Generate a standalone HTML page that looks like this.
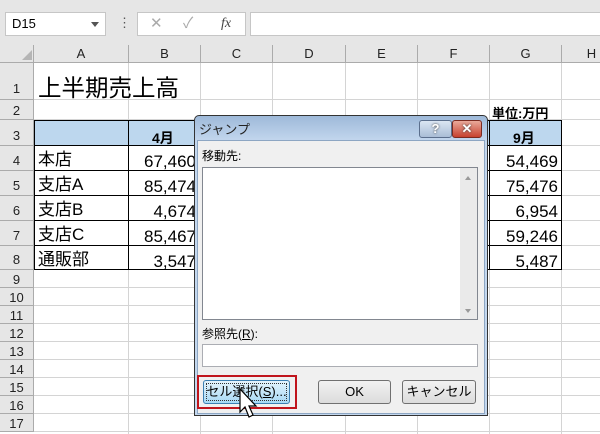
<!DOCTYPE html><html><head><meta charset="utf-8"><style>
*{box-sizing:border-box;margin:0;padding:0}
body{width:600px;height:434px;position:relative;overflow:hidden;background:#fff;font-family:"Liberation Sans","Noto Sans CJK JP",sans-serif}
.a{position:absolute}
.hc{position:absolute;top:45px;height:18px;border-right:1px solid #ababab;background:#e6e6e6;font-size:13px;text-align:center;line-height:18px;color:#222;border-bottom:1px solid #ababab}
.rh{position:absolute;left:0;width:34px;background:#e6e6e6;border-bottom:1px solid #ababab;border-right:1px solid #ababab;font-size:13px;text-align:center;color:#222}
.vl{position:absolute;top:63px;bottom:0;width:1px;background:#d4d4d4}
.hl{position:absolute;left:34px;right:0;height:1px;background:#d4d4d4}
.btn{position:absolute;height:24px;border:1px solid #707070;border-radius:3px;background:linear-gradient(#f2f2f2,#dcdcdc);font-size:13px;text-align:center;line-height:22px}
</style></head><body>
<div class="a" style="left:0;top:0;width:600px;height:45px;background:#e6e6e6"></div>
<div class="a" style="left:5px;top:12px;width:101px;height:24px;background:#fff;border:1px solid #c6c6c6;font-size:13px;line-height:22px;padding-left:6px">D15<span style="position:absolute;right:6px;top:9px;border:4px solid transparent;border-top:5px solid #555"></span></div>
<div class="a" style="left:118px;top:15px;font-size:13px;color:#555">⋮</div>
<div class="a" style="left:137px;top:12px;width:109px;height:24px;background:#fff;border:1px solid #c6c6c6;color:#aaa;font-size:15px;line-height:22px"><span style="position:absolute;left:12px">✕</span><span style="position:absolute;left:45px">✓</span><span style="position:absolute;left:83px;color:#444;font-family:'Liberation Serif';font-style:italic;font-size:14px">fx</span></div>
<div class="a" style="left:250px;top:12px;width:360px;height:24px;background:#fff;border:1px solid #c6c6c6"></div>
<div class="hc" style="left:0;width:34px"></div>
<div class="a" style="left:22px;top:50px;border:5px solid transparent;border-right-color:#b5b5b5;border-bottom-color:#b5b5b5"></div>
<div class="hc" style="left:34px;width:95px">A</div>
<div class="hc" style="left:129px;width:72px">B</div>
<div class="hc" style="left:201px;width:72px">C</div>
<div class="hc" style="left:273px;width:73px">D</div>
<div class="hc" style="left:346px;width:72px">E</div>
<div class="hc" style="left:418px;width:72px">F</div>
<div class="hc" style="left:490px;width:72px">G</div>
<div class="hc" style="left:562px;width:60px">H</div>
<div class="vl" style="left:128px"></div><div class="vl" style="left:200px"></div><div class="vl" style="left:272px"></div><div class="vl" style="left:345px"></div><div class="vl" style="left:417px"></div><div class="vl" style="left:489px"></div><div class="vl" style="left:561px"></div>
<div class="hl" style="top:99px"></div><div class="hl" style="top:119px"></div><div class="hl" style="top:145px"></div><div class="hl" style="top:170px"></div><div class="hl" style="top:195px"></div><div class="hl" style="top:220px"></div><div class="hl" style="top:245px"></div><div class="hl" style="top:269px"></div>
<div class="hl" style="top:287px"></div><div class="hl" style="top:305px"></div><div class="hl" style="top:323px"></div><div class="hl" style="top:341px"></div><div class="hl" style="top:359px"></div><div class="hl" style="top:377px"></div><div class="hl" style="top:395px"></div><div class="hl" style="top:413px"></div><div class="hl" style="top:431px"></div>
<div class="rh" style="top:63px;height:37px;line-height:52px">1</div>
<div class="rh" style="top:100px;height:20px;line-height:22px">2</div>
<div class="rh" style="top:120px;height:26px;line-height:32px">3</div>
<div class="rh" style="top:146px;height:25px;line-height:30px">4</div>
<div class="rh" style="top:171px;height:25px;line-height:30px">5</div>
<div class="rh" style="top:196px;height:25px;line-height:30px">6</div>
<div class="rh" style="top:221px;height:25px;line-height:30px">7</div>
<div class="rh" style="top:246px;height:24px;line-height:28px">8</div>
<div class="rh" style="top:270px;height:18px;line-height:20px">9</div>
<div class="rh" style="top:288px;height:18px;line-height:20px">10</div>
<div class="rh" style="top:306px;height:18px;line-height:20px">11</div>
<div class="rh" style="top:324px;height:18px;line-height:20px">12</div>
<div class="rh" style="top:342px;height:18px;line-height:20px">13</div>
<div class="rh" style="top:360px;height:18px;line-height:20px">14</div>
<div class="rh" style="top:378px;height:18px;line-height:20px">15</div>
<div class="rh" style="top:396px;height:18px;line-height:20px">16</div>
<div class="rh" style="top:414px;height:18px;line-height:20px">17</div>
<div class="a" style="left:38px;top:69px;font-size:23.5px">上半期売上高</div>
<div class="a" style="left:492px;top:103px;font-size:13px;font-weight:bold">単位:万円</div>
<div class="a" style="left:34px;top:120px;width:528px;height:26px;background:#bdd7ee;border:1px solid #000"></div>
<div class="a" style="left:128px;top:120px;width:1px;height:150px;background:#000"></div>
<div class="a" style="left:34px;top:120px;width:1px;height:150px;background:#000"></div>
<div class="a" style="left:561px;top:120px;width:1px;height:150px;background:#000"></div>
<div class="a" style="left:489px;top:120px;width:1px;height:150px;background:#000"></div>
<div class="a" style="left:34px;top:170px;width:528px;height:1px;background:#000"></div>
<div class="a" style="left:34px;top:195px;width:528px;height:1px;background:#000"></div>
<div class="a" style="left:34px;top:220px;width:528px;height:1px;background:#000"></div>
<div class="a" style="left:34px;top:245px;width:528px;height:1px;background:#000"></div>
<div class="a" style="left:34px;top:269px;width:528px;height:1px;background:#000"></div>
<div class="a" style="left:152px;top:128px;font-size:14px;font-weight:bold">4月</div>
<div class="a" style="left:513px;top:128px;font-size:14px;font-weight:bold">9月</div>
<div class="a" style="left:38px;top:149px;font-size:17px;line-height:22px">本店<br><span style="position:relative;top:3px">支店A</span><br><span style="position:relative;top:6px">支店B</span><br><span style="position:relative;top:9px">支店C</span><br><span style="position:relative;top:12px">通販部</span></div>
<div class="a" style="left:130px;top:149px;width:100px;text-align:left;font-size:17px;line-height:25px;padding-left:14px">67,460<br>85,474<br>&nbsp;&nbsp;4,674<br>85,467<br>&nbsp;&nbsp;3,547</div>
<div class="a" style="left:490px;top:149px;width:68px;text-align:right;font-size:17px;line-height:25px">54,469<br>75,476<br>6,954<br>59,246<br>5,487</div>
<div class="a" style="left:194px;top:115px;width:294px;height:301px;border:1px solid #333;border-radius:5px 5px 0 0;background:linear-gradient(#9eb9d9,#c3d7ee 25px,#c3d7ee);"></div>
<div class="a" style="left:199px;top:119px;font-size:13px;color:#222">ジャンプ</div>
<div class="a" style="left:419px;top:120px;width:33px;height:18px;border:1px solid #5b6f8d;border-radius:3px;background:linear-gradient(#dbe6f3,#a9bdd6);color:#fff;font-weight:bold;text-align:center;font-size:13px;line-height:16px;text-shadow:0 0 2px #333">?</div>
<div class="a" style="left:452px;top:120px;width:30px;height:18px;border:1px solid #7a2a20;border-radius:3px;background:linear-gradient(#e9a99a,#c7412f);color:#fff;font-weight:bold;text-align:center;font-size:13px;line-height:16px;text-shadow:0 0 2px #333">✕</div>
<div class="a" style="left:197px;top:140px;width:288px;height:274px;background:#f0f0f0;border:1px solid #8da6c3"></div>
<div class="a" style="left:202px;top:147px;font-size:12px">移動先:</div>
<div class="a" style="left:202px;top:167px;width:276px;height:153px;background:#fff;border:1px solid #828790"></div>
<div class="a" style="left:460px;top:168px;width:17px;height:151px;background:#eaeaea"></div>
<div class="a" style="left:465px;top:173px;border:3px solid transparent;border-bottom:4px solid #999"></div>
<div class="a" style="left:465px;top:309px;border:3px solid transparent;border-top:4px solid #999"></div>
<div class="a" style="left:202px;top:325px;font-size:12px">参照先(<u>R</u>):</div>
<div class="a" style="left:202px;top:344px;width:276px;height:23px;background:#fff;border:1px solid #abadb3"></div>
<div class="a" style="left:197px;top:375px;width:100px;height:34px;border:2px solid #c0141c"></div>
<div class="btn" style="left:203px;top:380px;width:87px;border-color:#3c7fb1;background:linear-gradient(#e5f4fc,#a7d9f5);outline:1px dotted #333;outline-offset:-4px">セル選択(<u>S</u>)...</div>
<div class="btn" style="left:318px;top:380px;width:73px">OK</div>
<div class="btn" style="left:402px;top:380px;width:74px">キャンセル</div>
<svg class="a" style="left:238px;top:388px" width="22" height="34" viewBox="0 0 22 34"><path d="M2 1 L2 24 L7 19 L11 29 L15 27 L11 18 L18 18 Z" fill="#fff" stroke="#000" stroke-width="1.2"/></svg>
</body></html>
